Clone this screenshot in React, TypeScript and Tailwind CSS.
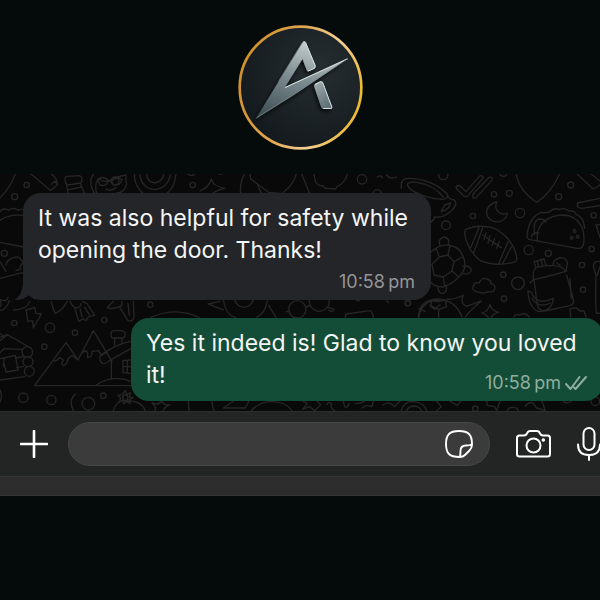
import React from "react";

type Dot = [number, number, number];

// every group of doodles is drawn on its own grid and scaled down by three
const doodles: { at: string; dots: Dot[]; paths: string[] }[] = [
  {
    at: "translate(0 165) scale(0.3333)",
    dots: [[80, 60, 8], [44, 95, 9], [13, 265, 9], [578, 60, 8], [345, 48, 12]],
    paths: [
      "M0 98Q30 70 46 27M90 24L146 72L152 76L172 60L165 48L154 58M172 60Q174 40 150 24",
      "M196 46Q190 36 204 34L238 32Q250 36 244 46Q250 52 240 54L204 60Q194 56 196 46M200 60L204 86M240 54L254 86M206 74L246 66",
      "M282 24Q262 50 284 86M290 86Q282 50 298 42Q320 58 344 38Q360 34 378 30Q376 50 380 56Q374 84 350 84M292 44Q308 30 326 46Q320 66 300 60ZM334 48Q350 32 366 44Q360 62 342 60ZM318 72Q330 80 348 68",
      "M404 24Q400 60 430 86M528 24Q526 66 500 86M420 24Q420 66 462 74Q506 70 512 24M440 26Q440 50 464 54Q488 50 492 26M560 24Q570 36 584 28",
      "M0 140Q10 126 26 136Q40 124 54 136Q64 130 74 134M0 166Q30 146 74 152M0 232L70 246M0 290Q8 302 18 320M18 300Q20 286 40 278Q58 272 62 284Q76 290 60 304Q66 316 48 316M0 340L70 322M0 404Q20 412 24 398",
    ],
  },
  {
    at: "translate(200 165) scale(0.3333)",
    dots: [[486, 43, 14], [532, 86, 12]],
    paths: [
      "M34 42Q38 64 74 70Q44 78 38 86M34 42Q28 66 0 78M54 24Q60 32 70 24",
      "M136 24Q118 50 122 86M150 24L152 42L206 82L250 86M184 86L172 56M290 24Q280 60 250 82M304 24L328 84M342 24Q344 66 368 62Q374 74 392 70Q408 76 412 64Q434 56 444 24",
      "M532 36Q540 28 548 38M560 30Q570 44 590 36",
    ],
  },
  {
    at: "translate(400 165) scale(0.3333)",
    dots: [
      [130, 30, 14], [282, 88, 8], [328, 85, 9], [360, 144, 14], [219, 153, 8], [138, 181, 13],
      [512, 60, 9], [476, 95, 9], [581, 151, 8], [386, 255, 14], [445, 265, 9], [575, 252, 8],
      [546, 300, 8], [549, 374, 8], [354, 355, 19], [310, 329, 8], [312, 401, 8], [24, 414, 8],
      [524, 198, 4], [515, 218, 4], [533, 215, 4], [310, 22, 12],
    ],
    paths: [
      // cup
      "M4 70Q0 40 26 40Q90 40 136 82Q150 92 138 100Q120 108 70 92Q26 76 22 60Q22 48 50 52Q100 58 130 96M142 92Q152 106 162 104Q176 116 154 138Q130 160 104 156Q102 166 92 172M134 120L152 114Q148 134 124 140Z",
      // double tick
      "M168 66Q174 58 182 64L198 80L238 34Q246 28 250 38L204 92Q196 98 188 90L170 72ZM220 86L266 38Q278 32 276 46L228 98Q218 102 218 92Z",
      "M348 24Q356 76 410 112Q454 84 480 24",
      "M290 110Q256 122 260 148Q270 174 298 170Q320 164 322 144Q306 152 292 138Q284 126 290 110Z",
      // football
      "M196 194Q236 176 284 190Q334 216 349 270Q354 290 340 292Q284 306 240 286Q202 256 194 206ZM238 186L212 248M248 188L222 262M324 230L296 296M334 246L308 296M248 210L304 248M258 204L252 224M270 212L264 234M284 220L276 242M298 230L290 250",
      // taco
      "M412 226Q408 170 462 154Q520 138 546 186Q556 216 550 240Q546 252 532 250L390 224Q378 222 382 206Q388 156 424 142Q440 144 450 140Q462 126 478 134Q494 126 506 138Q526 136 528 148Q552 156 554 190M404 208Q398 166 418 162Q438 164 438 172M394 216Q398 200 416 204",
      "M528 24L580 72L600 60M570 24L600 48M532 114L600 100M534 116Q526 128 546 130L600 122M588 180L600 178M588 180L600 216",
      // turtle
      "M92 262Q118 238 144 240Q178 244 188 272Q202 300 188 322Q164 356 128 366Q106 366 92 352M120 240Q112 222 132 216Q152 220 144 240M188 304Q208 300 214 314Q212 330 190 326M114 364Q114 386 128 386Q144 380 138 362M96 298L118 276L144 270L162 290L156 318L130 336L102 330ZM118 276L108 250M144 270L150 242M162 290L188 276M156 318L176 336M130 336L134 364",
      "M230 380Q214 376 220 362Q226 350 238 354Q244 336 260 342Q274 346 272 356Q288 358 284 374Q278 384 266 380Q250 388 230 380Z",
      // backpack
      "M402 290L432 282L438 302L408 308ZM412 288L416 306M424 286L428 304M408 308Q394 324 402 344L436 336L496 320Q490 302 460 302L438 302M402 344L412 420Q416 438 434 438L510 422Q524 416 520 404L500 330M460 302Q456 286 480 278Q502 278 502 296L498 320M470 294L480 300M400 344L390 354M510 340L514 400",
      "M384 378L394 382Q410 424 460 400Q456 438 416 440Q386 428 384 378ZM396 400Q418 432 450 414",
      "M600 290Q582 286 580 304L588 330Q586 440 590 446L600 444M600 304L592 330",
      // ball, star and leaf
      "M56 456Q56 406 112 402Q166 404 186 456M96 404Q112 416 136 404L140 424L116 434L92 422ZM116 434L116 456M56 430L76 440M142 402Q160 406 190 390Q178 416 200 424L244 408Q208 438 196 456",
      "M270 418Q274 438 296 442Q278 446 272 460M270 418Q264 440 246 444Q262 450 266 460M342 456Q344 446 360 450Q376 440 388 456M512 456L510 432L528 428L540 438L552 438L558 456",
    ],
  },
  {
    at: "translate(0 290) scale(0.3333)",
    dots: [
      [43, 99, 8], [150, 113, 14], [313, 90, 8], [225, 128, 8], [133, 170, 8], [70, 323, 14],
      [154, 330, 14], [265, 341, 19], [310, 317, 8], [451, 44, 8], [82, 186, 16], [84, 215, 15],
      [88, 244, 15], [376, 323, 8],
    ],
    paths: [
      "M0 60Q16 64 28 32M40 60Q80 60 90 34M0 30Q6 44 0 50",
      "M78 60L104 52L108 70L124 72L100 114L98 92L84 94Z",
      "M154 34Q160 60 166 70Q186 62 202 34M210 34Q216 48 224 52L236 94L250 86L258 92L266 80L284 76L262 42L248 34M224 52Q240 56 244 40M240 56L246 80M254 52L268 74",
      "M340 34L322 52Q334 60 358 50L384 92Q400 96 402 80L400 34M358 50Q368 48 366 34M384 40L388 76",
      "M452 82Q530 48 600 84",
      // log cabin
      "M0 142L22 134L92 174M22 134L0 152M0 188L12 176L66 178M0 206L12 204L10 230M12 204L46 196L54 240L18 246L12 220M46 204L70 200M50 232L70 230M0 270L74 260M0 130Q6 132 8 140",
      // mountains
      "M104 287L198 158L234 210L280 122L336 214M104 287L392 287M160 212Q172 216 178 202L190 210Q180 226 192 226Q202 222 204 206L216 196L234 210M246 188L258 182Q266 190 262 202Q278 204 276 184L296 182L304 196L322 186",
      // house
      "M336 144Q326 120 348 122L366 122Q384 128 370 144ZM344 146L344 166M366 146L366 156M392 154Q350 162 304 194Q294 204 304 218Q316 226 328 212L392 176M334 212L334 268M392 210L368 212L370 248L392 250M382 212L382 248M370 230L392 230M288 286Q338 252 392 274",
      "M0 336Q8 316 0 300M226 312Q204 332 220 362M340 362Q350 330 374 332Q424 330 436 362M376 302L380 314L392 308L388 320L400 324L388 328L390 340L378 334L372 342L368 332L358 336L362 324L354 316L366 314Z",
      "M456 338Q476 348 486 332Q490 348 510 344Q492 352 490 362M456 338Q472 352 464 362M565 332L567 362",
    ],
  },
  {
    at: "translate(200 260) scale(0.3333)",
    dots: [[292, 148, 26], [358, 124, 30], [623, 130, 8], [132, 114, 28]],
    paths: [
      "M70 120Q78 166 106 172M202 122Q196 160 170 172M60 124L24 132L70 150M206 136L228 172M268 152L258 156M318 142L330 136M384 142L402 148Q398 160 386 150",
      "M436 172L438 162L510 152Q518 156 520 172M470 122L478 122M560 122L566 128M656 172Q664 120 720 120M690 138L704 148L720 134",
      "M36 424Q36 440 42 452M100 424L70 444L136 444L146 424M154 452Q180 424 214 424Q260 426 276 452M310 424L322 430L308 448L328 440L344 452L362 434L352 424M380 434Q386 424 394 430Q390 444 404 452M430 424L434 440Q440 448 448 430M466 430Q480 432 494 424M486 444L500 436L516 440L520 424M548 436Q568 420 584 440Q594 428 600 424M604 452Q610 424 640 424Q674 428 680 452M620 452Q626 438 642 438Q660 440 664 452",
    ],
  },
  {
    at: "translate(400 360) scale(0.3333)",
    dots: [[226, 146, 8], [586, 124, 13]],
    paths: [
      "M110 124L124 140L110 152M150 124L172 136L182 124M260 124L262 136L284 140L290 152L300 124M322 152Q326 140 342 142Q354 144 354 152M376 138Q386 124 400 130L410 144L436 152L426 124M490 124Q500 134 514 124",
    ],
  },
];

const Wallpaper = () => (
  <svg
    className="absolute inset-0 h-full w-full"
    viewBox="0 174 600 237"
    preserveAspectRatio="xMidYMid slice"
    fill="none"
    stroke="#262626"
    strokeWidth="4"
    strokeLinecap="round"
    strokeLinejoin="round"
    aria-hidden="true"
  >
    {doodles.map((group) => (
      <g key={group.at} transform={group.at}>
        {group.dots.map(([x, y, r]) => (
          <circle key={`${x}-${y}`} cx={x} cy={y} r={r} />
        ))}
        {group.paths.map((d) => (
          <path key={d} d={d} />
        ))}
      </g>
    ))}
  </svg>
);

const Logo = () => (
  <svg className="size-[125px]" viewBox="39 30 374 374" role="img" aria-label="Logo">
    <defs>
      <linearGradient id="ring" x1="0" y1="0.3" x2="1" y2="0.6">
        <stop offset="0" stopColor="#cf8e2b" />
        <stop offset="0.4" stopColor="#e0a550" />
        <stop offset="0.7" stopColor="#f3cf94" />
        <stop offset="1" stopColor="#eab92f" />
      </linearGradient>
      <radialGradient id="disc" cx="0.65" cy="0.35" r="0.7">
        <stop offset="0" stopColor="#272e31" />
        <stop offset="1" stopColor="#13191d" />
      </radialGradient>
      <linearGradient id="steel" x1="0.6" y1="0" x2="0.2" y2="1">
        <stop offset="0" stopColor="#c9d1d2" />
        <stop offset="0.45" stopColor="#7f8e92" />
        <stop offset="1" stopColor="#3d4f55" />
      </linearGradient>
      <linearGradient id="leg" x1="0" y1="0" x2="0.5" y2="1">
        <stop offset="0" stopColor="#a3afb1" />
        <stop offset="1" stopColor="#5f7277" />
      </linearGradient>
      <filter id="shade" x="-20%" y="-20%" width="140%" height="140%">
        <feDropShadow dx="-4" dy="7" stdDeviation="6" floodColor="#000" floodOpacity="0.8" />
      </filter>
    </defs>
    <circle cx="226" cy="217" r="182" fill="url(#disc)" stroke="url(#ring)" strokeWidth="8" />
    <g filter="url(#shade)">
      <path d="M92 311L233 81Q237 74 241 81L271 152Q272 157 267 160L249 169Q246 169 244 164L232 132L179 217L367 131L205 240Z" fill="url(#steel)" />
      <path d="M267 214Q265 209 270 206L286 199Q291 198 293 203L321 276Q321 281 316 281L293 281Q290 280 288 276Z" fill="url(#leg)" />
    </g>
    <g fill="none" stroke="#d3dedf" strokeWidth="3" strokeLinejoin="round">
      <path d="M241 82L270 152Q271 157 266 160L249 168M180 217L367 131M270 208L286 200Q291 199 293 204L320 276Q320 280 314 280L294 280" />
      <path d="M94 308L205 238L364 133M231 83L160 199" stroke="#75868b" strokeWidth="2" />
    </g>
  </svg>
);

const App = () => {
  return (
    <main className="flex min-h-screen flex-col overflow-hidden bg-[#040b0a] font-['Inter','Liberation_Sans',sans-serif]">
      <header className="flex justify-center pt-[25px] pb-6">
        <Logo />
      </header>

      <section className="relative flex flex-col gap-[18px] overflow-hidden bg-[#090909] pt-[19px] pb-[10px] text-[23px] leading-8 text-[#f4f5f5]">
        <Wallpaper />
        <div className="relative mr-[169px] ml-[23px] rounded-[18px] bg-[#242528] pt-[9px] pr-4 pb-[2px] pl-[15px]">
          <svg className="absolute bottom-0 -left-2 h-5 w-5" viewBox="0 0 20 20" fill="#242528" aria-hidden="true">
            <path d="M8 0V4Q7 15 0 20Q9 20 14 15L20 20V0Z" />
          </svg>
          <p>It was also helpful for safety while opening the door. Thanks!</p>
          <time className="block text-right text-lg leading-8 text-[#949597]">10:58&#8201;pm</time>
        </div>

        <div className="relative -mr-[3px] ml-[131px] rounded-[18px] bg-[#144d37] pt-[9px] pr-4 pb-[2px] pl-[15px]">
          <p>
            Yes it indeed is! Glad to know you loved it!
            <span className="float-right mt-2 flex items-center gap-1 text-lg leading-8 text-[#8fae9f]">
              <time>10:58&#8201;pm</time>
              <svg className="h-4 w-[22px]" viewBox="0 0 22 16" fill="none" stroke="currentColor" strokeWidth="2" strokeLinecap="round" strokeLinejoin="round" role="img" aria-label="Delivered">
                <path d="M1 9L5.500 14L14.500 2M9 12.500L10.500 14L21 2" />
              </svg>
            </span>
          </p>
        </div>
      </section>

      {/* MESSAGE BAR */}
      <form className="-mr-px flex items-center border-t border-[#2c2e2d] bg-[#232524] py-[10px] pl-5 text-white" onSubmit={(e) => e.preventDefault()}>
        <button type="button" aria-label="Add attachment" className="mr-5 shrink-0">
          <svg className="size-7" viewBox="0 0 28 28" fill="none" stroke="currentColor" strokeWidth="2.6" strokeLinecap="round">
            <path d="M14 1V27M1 14H27" />
          </svg>
        </button>
        <div className="flex h-11 min-w-0 flex-1 items-center rounded-full border border-[#464646] bg-[#3b3b3b] pr-4 pl-5">
          <input type="text" aria-label="Message" className="min-w-0 flex-1 bg-transparent text-xl outline-none" />
          <button type="button" aria-label="Stickers" className="shrink-0">
            <svg className="size-7" viewBox="0 0 28 28" fill="none" stroke="currentColor" strokeWidth="1.9" strokeLinecap="round" strokeLinejoin="round">
              <path d="M14.500 27Q7 27 4 24Q1 21 1 14Q1 7 4 4Q7 1 14 1Q21 1 24 4Q27 7 27 14V15Q27 18 24 21L20 25Q18 27 14.500 27ZM15 26.500Q15.500 24 15.500 21Q15.500 15.500 21 15.500Q25 15.500 26.500 14.500" />
            </svg>
          </button>
        </div>
        <button type="button" aria-label="Camera" className="ml-[26px] shrink-0">
          <svg className="h-7 w-[35px]" viewBox="0 0 35 28" fill="none" stroke="currentColor" strokeWidth="2" strokeLinejoin="round">
            <path d="M3.500 5.500H8Q10 5.500 11 3.500Q12 1 14 1H21Q23 1 24 3.500Q25 5.500 27 5.500H31.500Q34 5.500 34 8V24Q34 26.500 31.500 26.500H3.500Q1 26.500 1 24V8Q1 5.500 3.500 5.500Z" />
            <circle cx="17.500" cy="15.500" r="7" />
            <circle cx="27.300" cy="10" r="1.800" fill="currentColor" stroke="none" />
          </svg>
        </button>
        <button type="button" aria-label="Record voice message" className="ml-[26px] shrink-0">
          <svg className="h-[34px] w-6" viewBox="0 0 24 34" fill="none" stroke="currentColor" strokeWidth="2" strokeLinecap="round">
            <rect x="6.500" y="1" width="11" height="22" rx="5.500" />
            <path d="M1 17.500Q1 28 12 28Q23 28 23 17.500M12 28V33" />
          </svg>
        </button>
      </form>
      <div className="h-5 border-t border-b border-[#343434] bg-[#2d2d2d]" />
    </main>
  );
};

export default App;
